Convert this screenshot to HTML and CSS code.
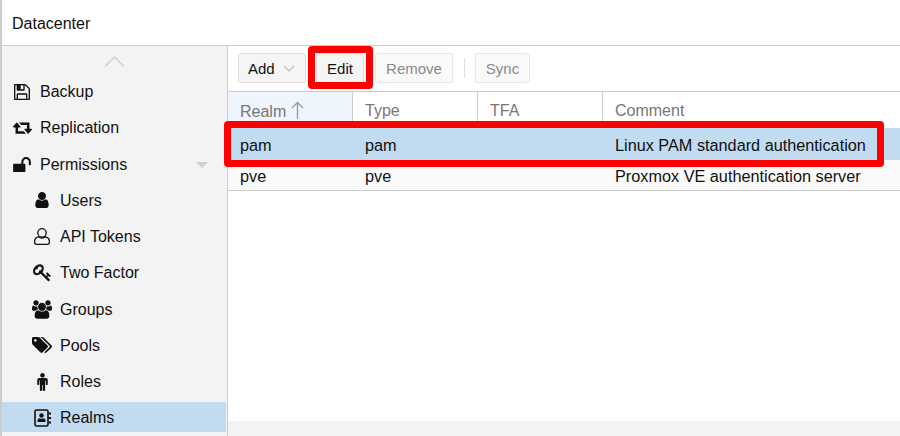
FILE: index.html
```html
<!DOCTYPE html>
<html>
<head>
    <title>Datacenter - Realms</title>
    <link rel="stylesheet" href="styles.css">
</head>
<body>
    <div class="app">
        <div class="title-bar">Datacenter</div>
        <div class="content">
            <div class="side-menu">
                <div class="scroll-up">
                    <svg width="21" height="11" viewBox="0 0 21 11"><path d="M1 10.500 10.500 1 20 10.500" fill="none" stroke="#d2d2d2" stroke-width="1.600"/></svg>
                </div>
                <div class="menu-list">
                    <div class="menu-item">
                        <span class="menu-icon"><svg width="16" height="16" viewBox="128 128 1536 1536"><path d="M512 1536h768v-384h-768v384zm896 0h128v-896q0-14-10-38.500t-20-34.500l-281-281q-10-10-34-20t-39-10v416q0 40-28 68t-68 28h-576q-40 0-68-28t-28-68v-416h-128v1280h128v-416q0-40 28-68t68-28h832q40 0 68 28t28 68v416zm-384-928v-320q0-13-9.500-22.500t-22.500-9.500h-192q-13 0-22.500 9.500t-9.500 22.500v320q0 13 9.500 22.500t22.500 9.500h192q13 0 22.500-9.500t9.500-22.500zm640 32v928q0 40-28 68t-68 28h-1344q-40 0-68-28t-28-68v-1344q0-40 28-68t68-28h928q40 0 88 20t76 48l280 280q28 28 48 76t20 88z" fill="#111"/></svg></span>
                        <span>Backup</span>
                    </div>
                    <div class="menu-item">
                        <span class="menu-icon"><svg width="19" height="13" viewBox="-64 256 1920 1280"><path d="M1216 1504q0 13-9.500 22.500t-22.500 9.500h-960q-8 0-13.500-2t-9-7-5.500-8-3-11.500-1-11.500v-600h-192q-26 0-45-19t-19-45q0-24 15-41l320-384q19-22 49-22t49 22l320 384q15 17 15 41 0 26-19 45t-45 19h-192v384h576q16 0 25 11l160 192q7 10 7 21zm640-416q0 24-15 41l-320 384q-20 23-49 23t-49-23l-320-384q-15-17-15-41 0-26 19-45t45-19h192v-384h-576q-16 0-25-12l-160-192q-7-9-7-20 0-13 9.500-22.500t22.500-9.500h960q8 0 13.500 2t9 7 5.500 8 3 11.500 1 11.500v600h192q26 0 45 19t19 45z" fill="#111"/></svg></span>
                        <span>Replication</span>
                    </div>
                    <div class="menu-item">
                        <span class="menu-icon"><svg width="18" height="15" viewBox="64 128 1664 1408"><path d="M1728 576v256q0 26-19 45t-45 19h-64q-26 0-45-19t-19-45v-256q0-106-75-181t-181-75-181 75-75 181v192h96q40 0 68 28t28 68v576q0 40-28 68t-68 28h-960q-40 0-68-28t-28-68v-576q0-40 28-68t68-28h672v-192q0-185 131.500-316.500t316.500-131.500 316.500 131.500 131.500 316.500z" fill="#111"/></svg></span>
                        <span>Permissions</span>
                        <span class="caret"></span>
                    </div>
                    <div class="menu-item sub-item">
                        <span class="menu-icon"><svg width="14" height="16" viewBox="256 128 1280 1536"><path d="M1536 1399q0 109-62.500 187t-150.500 78h-854q-88 0-150.500-78t-62.500-187q0-85 8.500-160.500t31.500-152 58.500-131 94-89 134.500-34.500q131 128 313 128t313-128q76 0 134.500 34.500t94 89 58.500 131 31.500 152 8.500 160.500zm-256-887q0 159-112.500 271.500t-271.500 112.500-271.500-112.500-112.500-271.500 112.500-271.500 271.500-112.500 271.500 112.500 112.500 271.500z" fill="#111"/></svg></span>
                        <span>Users</span>
                    </div>
                    <div class="menu-item sub-item">
                        <span class="menu-icon"><svg width="16" height="17" viewBox="0 0 16 17"><circle cx="8" cy="4.900" r="4.200" fill="none" stroke="#111" stroke-width="1.300"/><path d="M4.200 8.800Q8 11.200 11.800 8.800 15.400 9.800 15.400 13.500V14.300A2 2 0 0 1 13.400 16.300H2.600A2 2 0 0 1 .6 14.300V13.500Q.6 9.800 4.200 8.800Z" fill="none" stroke="#111" stroke-width="1.300"/></svg></span>
                        <span>API Tokens</span>
                    </div>
                    <div class="menu-item sub-item">
                        <span class="menu-icon"><svg width="19" height="19" viewBox="0 0 1792 1792"><path d="M832 512q0-80-56-136t-136-56-136 56-56 136q0 42 19 83-41-19-83-19-80 0-136 56t-56 136 56 136 136 56 136-56 56-136q0-42-19-83 41 19 83 19 80 0 136-56t56-136zm851 704q0 17-49 66t-66 49q-9 0-28.500-16t-36.500-33-38.500-40-24.500-26l-96 96 220 220q28 28 28 68 0 42-39 81t-81 39q-40 0-68-28l-671-671q-176 131-365 131-163 0-265.500-102.500t-102.500-265.500q0-160 95-313t248-248 313-95q163 0 265.500 102.500t102.500 265.500q0 189-131 365l355 355 96-96q-3-3-26-24.500t-40-38.500-33-36.500-16-28.500q0-17 49-66t66-49q13 0 23 10 6 6 46 44.500t82 79.500 86.500 86 73 78 28.500 41z" fill="#111"/></svg></span>
                        <span>Two Factor</span>
                    </div>
                    <div class="menu-item sub-item">
                        <span class="menu-icon"><svg width="20" height="19" viewBox="0 0 1920 1792"><path d="M593 896q-162 5-265 128h-134q-82 0-138-40.500t-56-118.500q0-353 124-353 6 0 43.500 21t97.500 42.500 119 21.500q67 0 133-23-5 37-5 66 0 139 81 256zm1071 637q0 120-73 189.500t-194 69.500h-874q-121 0-194-69.500t-73-189.500q0-53 3.500-103.500t14-109 26.500-108.500 43-97.500 62-81 85.500-53.500 111.500-20q10 0 43 21.500t73 48 107 48 135 21.500 135-21.500 107-48 73-48 43-21.500q61 0 111.500 20t85.500 53.500 62 81 43 97.500 26.500 108.500 14 109 3.500 103.500zm-1024-1277q0 106-75 181t-181 75-181-75-75-181 75-181 181-75 181 75 75 181zm704 384q0 159-112.500 271.500t-271.500 112.500-271.500-112.500-112.500-271.500 112.500-271.500 271.500-112.500 271.500 112.500 112.500 271.500zm576 225q0 78-56 118.500t-138 40.500h-134q-103-123-265-128 81-117 81-256 0-29-5-66 66 23 133 23 59 0 119-21.500t97.500-42.500 43.500-21q124 0 124 353zm-128-609q0 106-75 181t-181 75-181-75-75-181 75-181 181-75 181 75 75 181z" fill="#111"/></svg></span>
                        <span>Groups</span>
                    </div>
                    <div class="menu-item sub-item">
                        <span class="menu-icon"><svg width="20" height="16" viewBox="0 128 1899 1515"><path d="M448 448q0-53-37.500-90.500t-90.500-37.500-90.500 37.500-37.500 90.500 37.500 90.500 90.500 37.500 90.500-37.500 37.500-90.500zm1067 576q0 53-37 90l-491 492q-39 37-91 37-53 0-90-37l-715-716q-38-37-64.500-101t-26.500-117v-416q0-52 38-90t90-38h416q53 0 117 26.500t102 64.500l715 714q37 39 37 91zm384 0q0 53-37 90l-491 492q-39 37-91 37-36 0-59-14t-53-45l470-470q37-37 37-90 0-52-37-91l-715-714q-38-38-102-64.500t-117-26.500h224q53 0 117 26.500t102 64.500l715 714q37 39 37 91z" fill="#111" fill-rule="evenodd"/></svg></span>
                        <span>Pools</span>
                    </div>
                    <div class="menu-item sub-item">
                        <span class="menu-icon"><svg width="11" height="18" viewBox="0 160 1024 1760"><path d="M1024 832v416q0 40-28 68t-68 28-68-28-28-68v-352h-64v912q0 46-33 79t-79 33-79-33-33-79v-464h-64v464q0 46-33 79t-79 33-79-33-33-79v-912h-64v352q0 40-28 68t-68 28-68-28-28-68v-416q0-80 56-136t136-56h640q80 0 136 56t56 136zm-288-448q0 93-65.500 158.500t-158.500 65.500-158.500-65.500-65.500-158.500 65.500-158.500 158.500-65.500 158.500 65.500 65.500 158.500z" fill="#111"/></svg></span>
                        <span>Roles</span>
                    </div>
                    <div class="menu-item sub-item selected">
                        <span class="menu-icon"><svg width="17" height="18" viewBox="0 0 17 18"><rect x="1" y="1" width="13" height="16" rx="1.500" fill="none" stroke="#111" stroke-width="1.600"/><circle cx="7.500" cy="6.500" r="2.200" fill="#111"/><path d="M3.500 13V11.500Q3.500 9.500 5.500 9.200 7.500 10.300 9.500 9.200 11.500 9.500 11.500 11.500V13Z" fill="#111"/><path d="M14.500 3.500H17V5.500H14.500ZM14.500 8H17V10H14.500ZM14.500 12.500H17V14.500H14.500Z" fill="#111"/></svg></span>
                        <span>Realms</span>
                    </div>
                </div>
            </div>
            <div class="main-panel">
                <div class="toolbar">
                    <button class="btn add-btn">Add<svg width="12" height="7" viewBox="0 0 12 7"><path d="M1 1 6 6 11 1" fill="none" stroke="#c8c8c8" stroke-width="1.500"/></svg></button>
                    <button class="btn edit-btn">Edit</button>
                    <button class="btn disabled remove-btn">Remove</button>
                    <span class="separator"></span>
                    <button class="btn disabled sync-btn">Sync</button>
                </div>
                <div class="grid-area">
                    <table class="realm-table">
                        <thead>
                            <tr>
                                <th class="sorted">Realm <svg width="13" height="18" viewBox="0 0 13 18"><path d="M6.500 18V1.500M1 7 6.500 1.500 12 7" fill="none" stroke="#999" stroke-width="1.300"/></svg></th>
                                <th>Type</th>
                                <th>TFA</th>
                                <th>Comment</th>
                            </tr>
                        </thead>
                        <tbody>
                            <tr class="selected-row">
                                <td>pam</td>
                                <td>pam</td>
                                <td></td>
                                <td>Linux PAM standard authentication</td>
                            </tr>
                            <tr class="alt-row">
                                <td>pve</td>
                                <td>pve</td>
                                <td></td>
                                <td>Proxmox VE authentication server</td>
                            </tr>
                        </tbody>
                    </table>
                </div>
                <div class="scroll-strip"></div>
            </div>
        </div>
        <div class="marker marker-edit"></div>
        <div class="marker marker-row"></div>
    </div>
</body>
</html>
```

FILE: styles.css
```css
html, body {
    margin: 0;
    height: 100%;
    overflow: hidden;
}

body {
    font-family: "Liberation Sans", Arial, sans-serif;
    font-size: 16px;
    color: #111;
    background-color: #fff;
}

.app {
    position: relative;
    display: flex;
    flex-direction: column;
    height: 436px;
    border-left: 2px solid #ccc;
}

.title-bar {
    height: 45px;
    line-height: 47px;
    padding-left: 10px;
    border-bottom: 1px solid #ccc;
    flex-shrink: 0;
}

.content {
    display: flex;
    flex: 1;
    min-height: 0;
}

/* left menu */
.side-menu {
    width: 225px;
    flex-shrink: 0;
    background-color: #f3f3f3;
    border-right: 1px solid #ccc;
}

.scroll-up {
    display: flex;
    justify-content: center;
    height: 30.2px;
    padding-top: 10px;
    box-sizing: border-box;
}

.menu-list {
    display: flex;
    flex-direction: column;
    gap: 6.25px;
}

.menu-item {
    display: flex;
    align-items: center;
    height: 30px;
    margin-right: 1px;
    padding: 2px 0 0 10px;
    box-sizing: border-box;
}

.sub-item {
    padding-left: 30px;
}

.menu-icon {
    display: flex;
    align-items: center;
    justify-content: center;
    width: 20px;
    margin-right: 8px;
    margin-top: -1px;
}

.selected {
    background-color: #c1dbf0;
}

.caret {
    margin-left: auto;
    margin-right: 18px;
    margin-top: 1px;
    border-left: 6px solid transparent;
    border-right: 6px solid transparent;
    border-top: 6px solid #d0d0d0;
}

/* right panel */
.main-panel {
    display: flex;
    flex-direction: column;
    flex: 1;
    min-width: 0;
}

.toolbar {
    display: flex;
    align-items: flex-start;
    height: 46px;
    padding: 7px 0 0 10px;
    box-sizing: border-box;
    border-bottom: 1px solid #ccc;
    flex-shrink: 0;
}

.btn {
    height: 30px;
    padding: 0 10px;
    font-family: inherit;
    font-size: 15px;
    color: #111;
    background-color: #f5f5f5;
    border: 1px solid #ddd;
    border-radius: 3px;
    box-sizing: border-box;
    white-space: nowrap;
}

.add-btn {
    width: 68px;
    padding: 0 0 0 9px;
    text-align: left;
}

.add-btn svg {
    margin-left: 8px;
    vertical-align: 2px;
}

.edit-btn {
    width: 48px;
    padding: 0;
    margin-left: 10px;
}

.remove-btn {
    width: 78px;
    padding: 0;
    margin-left: 11px;
}

.disabled {
    color: #8a8a8a;
    background-color: #f9f9f9;
    border-color: #e8e8e8;
}

.separator {
    width: 1px;
    height: 20px;
    margin: 5px 10px 0 11px;
    background-color: #ddd;
}

.sync-btn {
    width: 55px;
    padding: 0;
}

.grid-area {
    flex: 1;
    min-height: 0;
}

.realm-table {
    width: 100%;
    table-layout: fixed;
    border-collapse: separate;
    border-spacing: 0;
}

.realm-table th, .realm-table td {
    padding: 2px 0 0 12px;
    text-align: left;
    font-weight: normal;
    box-sizing: border-box;
}

.realm-table th {
    width: 125px;
    height: 36px;
    color: #777;
    border-right: 1px solid #ccc;
}

.realm-table th:last-child {
    width: auto;
    border-right: none;
}

.realm-table th svg {
    vertical-align: -2px;
}

.realm-table th.sorted {
    background-color: #eef5fc;
}

.realm-table td {
    font-size: 16.25px;
    white-space: nowrap;
}

.selected-row td {
    height: 32px;
    background-color: #c1dbf0;
}

.alt-row td {
    height: 31px;
    background-color: #fafafa;
    border-bottom: 1px solid #ccc;
}

.scroll-strip {
    height: 15px;
    background-color: #f3f3f3;
    flex-shrink: 0;
}

/* red markers drawn over the screenshot */
.marker {
    position: absolute;
    border: 7px solid #f00;
    border-radius: 4px;
    box-sizing: border-box;
}

.marker-edit {
    left: 306px;
    top: 46px;
    width: 65px;
    height: 43px;
}

.marker-row {
    left: 222px;
    top: 121px;
    width: 660px;
    height: 46px;
}
```
